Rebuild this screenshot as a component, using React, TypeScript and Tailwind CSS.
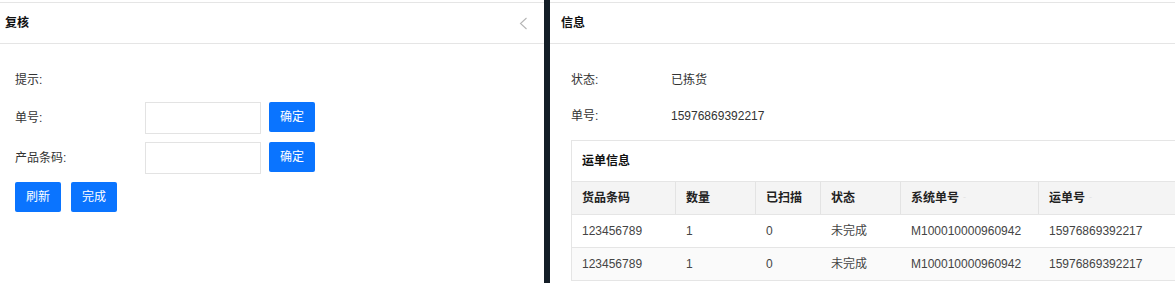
import { ReactNode } from "react";

const font = { fontFamily: '"Liberation Sans", "Noto Sans CJK SC", sans-serif' };

const cols = [
  { key: "barcode", title: "货品条码", w: "w-[104px]" },
  { key: "qty", title: "数量", w: "w-[80px]" },
  { key: "scanned", title: "已扫描", w: "w-[65px]" },
  { key: "status", title: "状态", w: "w-[80px]" },
  { key: "sysNo", title: "系统单号", w: "w-[138px]", sort: true },
  { key: "waybill", title: "运单号", w: "w-[160px]", sort: true },
];

const rows = [
  { barcode: "123456789", qty: "1", scanned: "0", status: "未完成", sysNo: "M100010000960942", waybill: "15976869392217" },
  { barcode: "123456789", qty: "1", scanned: "0", status: "未完成", sysNo: "M100010000960942", waybill: "15976869392217" },
];

function PanelHeader({ title, pl, children }: { title: string; pl: string; children?: ReactNode }) {
  return (
    <div className={`flex h-[42px] items-center justify-between border-y border-[#e5e5e5] ${pl}`}>
      <span className="text-[12px] font-bold text-[#111]">{title}</span>
      {children}
    </div>
  );
}

function BlueButton({ label }: { label: string }) {
  return (
    <button className="h-[30px] w-[46px] rounded-[2px] bg-[#0a74ff] text-[12px] text-white">{label}</button>
  );
}

export default function App() {
  return (
    <div style={font} className="flex h-[283px] w-[1175px] overflow-hidden bg-white pt-[2px] text-[12px] text-[#333]">
      {/* 复核 */}
      <div className="w-[544px] shrink-0">
        <PanelHeader title="复核" pl="pl-[5px] pr-[16px]">
          <svg width="9" height="13" viewBox="0 0 9 13" className="mt-[1px]">
            <path d="M7.5 1 L1.5 6.5 L7.5 12" fill="none" stroke="#b5b5b5" strokeWidth="1.1" />
          </svg>
        </PanelHeader>

        <div className="pl-[15px] pt-[20px]">
          <div className="flex h-[32px] items-center">提示:</div>

          <div className="mt-[6px] flex items-start">
            <div className="flex h-[32px] w-[130px] items-center">单号:</div>
            <input className="h-[32px] w-[116px] border border-[#e3e3e3] outline-none" />
            <div className="ml-[8px]">
              <BlueButton label="确定" />
            </div>
          </div>

          <div className="mt-[8px] flex items-start">
            <div className="flex h-[32px] w-[130px] items-center">产品条码:</div>
            <input className="h-[32px] w-[116px] border border-[#e3e3e3] outline-none" />
            <div className="ml-[8px]">
              <BlueButton label="确定" />
            </div>
          </div>

          <div className="mt-[8px] flex gap-[10px]">
            <BlueButton label="刷新" />
            <BlueButton label="完成" />
          </div>
        </div>
      </div>

      <div className="-mt-[2px] w-[6px] shrink-0 bg-[#141e27]" />

      {/* 信息 */}
      <div className="min-w-0 flex-1">
        <PanelHeader title="信息" pl="pl-[11px]" />

        <div className="pl-[21px] pt-[20px]">
          <div className="flex h-[32px] items-center">
            <span className="w-[100px]">状态:</span>
            <span>已拣货</span>
          </div>
          <div className="mt-[4px] flex h-[32px] items-center">
            <span className="w-[100px]">单号:</span>
            <span>15976869392217</span>
          </div>

          <div className="mt-[8px] w-[640px] border-l border-t border-[#e5e5e5]">
            <div className="flex h-[40px] items-center pl-[10px] font-bold text-[#111]">运单信息</div>

            <div className="flex h-[34px] border-y border-[#e5e5e5] bg-[#f4f4f4] font-bold text-[#222]">
              {cols.map((c, i) => (
                <div
                  key={c.key}
                  className={`flex items-center px-[10px] ${c.w} ${i < cols.length - 1 ? "border-r border-[#e3e3e3]" : ""}`}
                >
                  {c.title}
                  {c.sort && <span className="ml-[4px] text-[9px] font-normal text-[#e2e2e2]">-</span>}
                </div>
              ))}
            </div>

            {rows.map((r, ri) => (
              <div
                key={ri}
                className={`flex h-[33px] border-b border-[#e5e5e5] text-[#444] ${ri % 2 === 1 ? "bg-[#fafafa]" : "bg-white"}`}
              >
                {cols.map((c, i) => (
                  <div
                    key={c.key}
                    className={`flex items-center px-[10px] ${c.w} ${i < cols.length - 1 ? "border-r border-transparent" : ""}`}
                  >
                    {r[c.key as keyof typeof r]}
                  </div>
                ))}
              </div>
            ))}
          </div>
        </div>
      </div>
    </div>
  );
}
